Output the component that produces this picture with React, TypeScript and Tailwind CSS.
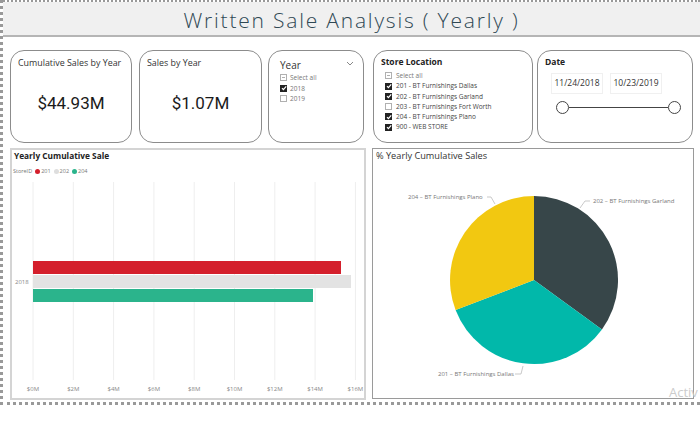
import React from 'react';

const font = { fontFamily: '"Open Sans", "Noto Sans", sans-serif' };

const Box = ({ state }: { state: 'on' | 'off' | 'part' }) => {
    if (state === 'on') {
        return (
            <span className="w-[7px] h-[7px] bg-[#222] flex items-center justify-center shrink-0">
                <svg width="6" height="6" viewBox="0 0 6 6"><path d="M1 3.2 L2.4 4.6 L5.2 1.3" stroke="white" strokeWidth="1.2" fill="none" /></svg>
            </span>
        );
    }
    return (
        <span className="w-[7px] h-[7px] border border-[#b0b0b0] bg-white flex items-center justify-center shrink-0">
            {state === 'part' && <span className="w-[3px] h-[1px] bg-[#b0b0b0]"></span>}
        </span>
    );
};

const ticks = ['$0M', '$2M', '$4M', '$6M', '$8M', '$10M', '$12M', '$14M', '$16M'];

const BarChart = () => (
    <svg width="352" height="222" viewBox="0 0 352 222" className="block">
        {ticks.map((t, i) => {
            const x = 21 + 40.3 * i;
            return (
                <g key={t}>
                    <line x1={x} y1="6" x2={x} y2="204" stroke="#eeeeee" strokeWidth="1" />
                    <text x={x} y="215" textAnchor="middle" fontSize="6" fill="#888">{t}</text>
                </g>
            );
        })}
        <rect x="21" y="85" width="308" height="13" fill="#d41f2c" />
        <rect x="21" y="99" width="318" height="13" fill="#e3e3e3" />
        <rect x="21" y="113" width="280" height="13" fill="#2bb48c" />
        <text x="3" y="108" fontSize="6" fill="#888">2018</text>
    </svg>
);

const PieChart = () => (
    <svg width="320" height="235" viewBox="0 0 320 235" className="block">
        <path d="M161 117 L161 33 A84 84 0 0 1 228.96 166.4 Z" fill="#374649" />
        <path d="M161 117 L228.96 166.4 A84 84 0 0 1 82.6 147.1 Z" fill="#01b8aa" />
        <path d="M161 117 L82.6 147.1 A84 84 0 0 1 161 33 Z" fill="#f2c811" />
        <text x="35" y="36" fontSize="6" fill="#777">204 – BT Furnishings Plano</text>
        <polyline points="114,34 118,34 122,41" fill="none" stroke="#bbb" strokeWidth="0.8" />
        <text x="220" y="40" fontSize="6" fill="#777">202 – BT Furnishings Garland</text>
        <polyline points="207,45 212,38 217,38" fill="none" stroke="#bbb" strokeWidth="0.8" />
        <text x="65" y="213" fontSize="6" fill="#777">201 – BT Furnishings Dallas</text>
        <polyline points="142,211 148,211 150,203" fill="none" stroke="#bbb" strokeWidth="0.8" />
    </svg>
);

const stores: { label: string; state: 'on' | 'off' | 'part' }[] = [
    { label: 'Select all', state: 'part' },
    { label: '201 - BT Furnishings Dallas', state: 'on' },
    { label: '202 - BT Furnishings Garland', state: 'on' },
    { label: '203 - BT Furnishings Fort Worth', state: 'off' },
    { label: '204 - BT Furnishings Plano', state: 'on' },
    { label: '900 - WEB STORE', state: 'on' },
];

const App = () => {
    return (
        <div className="w-[700px] h-[435px] bg-white relative overflow-hidden" style={font}>
            <div className="h-[405px] border-l-[3px] border-t-2 border-b-[3px] border-dotted border-[#999] flex flex-col">
                {/* Header */}
                <div className="h-[35px] pt-[3px] bg-[#f0f0f0] border-b-2 border-[#b5b5b5] flex items-center justify-center shrink-0">
                    <h1 className="text-[21px] leading-[26px] font-light text-[#2f4854] tracking-[1.8px]">Written Sale Analysis ( Yearly )</h1>
                </div>

                <div className="pl-[7px] pt-[13px]">
                    {/* Cards row */}
                    <div className="flex h-[93px]">
                        <div className="w-[122px] border-[1.5px] border-[#8c8c8c] rounded-[14px] flex flex-col">
                            <div className="pl-[7px] pt-[6px] text-[8.9px] leading-[12px] text-[#333]">Cumulative Sales by Year</div>
                            <div className="flex-1 flex items-center justify-center pb-[3px] text-[17px] text-[#1a1a1a]" style={{ fontFamily: 'Roboto, sans-serif' }}>$44.93M</div>
                        </div>
                        <div className="w-[123px] ml-[7px] border-[1.5px] border-[#8c8c8c] rounded-[14px] flex flex-col">
                            <div className="pl-[7px] pt-[6px] text-[8.9px] leading-[12px] text-[#333]">Sales by Year</div>
                            <div className="flex-1 flex items-center justify-center pb-[3px] text-[17px] text-[#1a1a1a]" style={{ fontFamily: 'Roboto, sans-serif' }}>$1.07M</div>
                        </div>
                        <div className="w-[96px] ml-[6px] border-[1.5px] border-[#8c8c8c] rounded-[14px] pl-[11px] pr-[9px] pt-[8px]">
                            <div className="flex items-center justify-between">
                                <span className="text-[10px] leading-[12px] text-[#333]">Year</span>
                                <svg width="8" height="5" viewBox="0 0 8 5" className="-mt-[3px]"><path d="M1 1 L4 4 L7 1" stroke="#888" strokeWidth="1" fill="none" /></svg>
                            </div>
                            <div className="mt-[3px] flex flex-col gap-[3px] text-[6.5px] leading-[7.5px] text-[#777]">
                                <div className="flex items-center gap-[3px]"><Box state="part" />Select all</div>
                                <div className="flex items-center gap-[3px]"><Box state="on" />2018</div>
                                <div className="flex items-center gap-[3px]"><Box state="off" />2019</div>
                            </div>
                        </div>
                        <div className="w-[160px] ml-[9px] border-[1.5px] border-[#8c8c8c] rounded-[14px] pl-[7px] pt-[5px]">
                            <div className="text-[8.5px] leading-[12px] font-bold text-[#222]">Store Location</div>
                            <div className="mt-[4px] pl-[4px] flex flex-col gap-[2.8px] text-[6.5px] leading-[7.5px] text-[#444]">
                                {stores.map((s) => (
                                    <div key={s.label} className={`flex items-center gap-[4px] ${s.state === 'part' ? 'text-[#777]' : ''}`}>
                                        <Box state={s.state} />
                                        {s.label}
                                    </div>
                                ))}
                            </div>
                        </div>
                        <div className="w-[156px] ml-[4px] border-[1.5px] border-[#8c8c8c] rounded-[14px] pl-[7px] pr-[10px] pt-[5px]">
                            <div className="text-[8.5px] leading-[12px] font-bold text-[#222]">Date</div>
                            <div className="mt-[5px] pl-[6px] flex gap-[7px]">
                                <div className="w-[52px] h-[21px] border border-[#f0f0f0] flex items-center justify-center text-[8.5px] text-[#333]">11/24/2018</div>
                                <div className="w-[52px] h-[21px] border border-[#f0f0f0] flex items-center justify-center text-[8.5px] text-[#333]">10/23/2019</div>
                            </div>
                            <div className="mt-[7px] ml-[11px] flex items-center">
                                <span className="w-[13px] h-[13px] rounded-full border-[1.5px] border-[#444] bg-white shrink-0"></span>
                                <span className="w-[99px] h-[1.5px] bg-[#444]"></span>
                                <span className="w-[13px] h-[13px] rounded-full border-[1.5px] border-[#444] bg-white shrink-0"></span>
                            </div>
                        </div>
                    </div>

                    {/* Charts row */}
                    <div className="flex mt-[5px]">
                        <div className="w-[356px] h-[252px] border-2 border-[#d4d4d4] flex flex-col">
                            <div className="pl-[2px] text-[8.3px] leading-[12px] font-bold text-[#222]">Yearly Cumulative Sale</div>
                            <div className="mt-[4px] pl-[1px] h-[10px] flex items-center gap-[3px] text-[5.5px] text-[#777]">
                                <span>StoreID</span>
                                <span className="flex items-center gap-[1px]"><span className="w-[5px] h-[5px] rounded-full bg-[#d41f2c]"></span>201</span>
                                <span className="flex items-center gap-[1px]"><span className="w-[5px] h-[5px] rounded-full bg-[#dedede]"></span>202</span>
                                <span className="flex items-center gap-[1px]"><span className="w-[5px] h-[5px] rounded-full bg-[#2bb48c]"></span>204</span>
                            </div>
                            <BarChart />
                        </div>
                        <div className="w-[322px] h-[251px] ml-[6px] border border-[#9a9a9a] flex flex-col">
                            <div className="pl-[3px] pt-[1px] h-[14px] text-[9.2px] leading-[12px] text-[#333]">% Yearly Cumulative Sales</div>
                            <PieChart />
                        </div>
                    </div>
                </div>
            </div>
            <div className="absolute left-[669px] top-[384px] text-[13px] leading-[16px] text-[#cccccc]">Activ</div>
        </div>
    );
};

export default App;
